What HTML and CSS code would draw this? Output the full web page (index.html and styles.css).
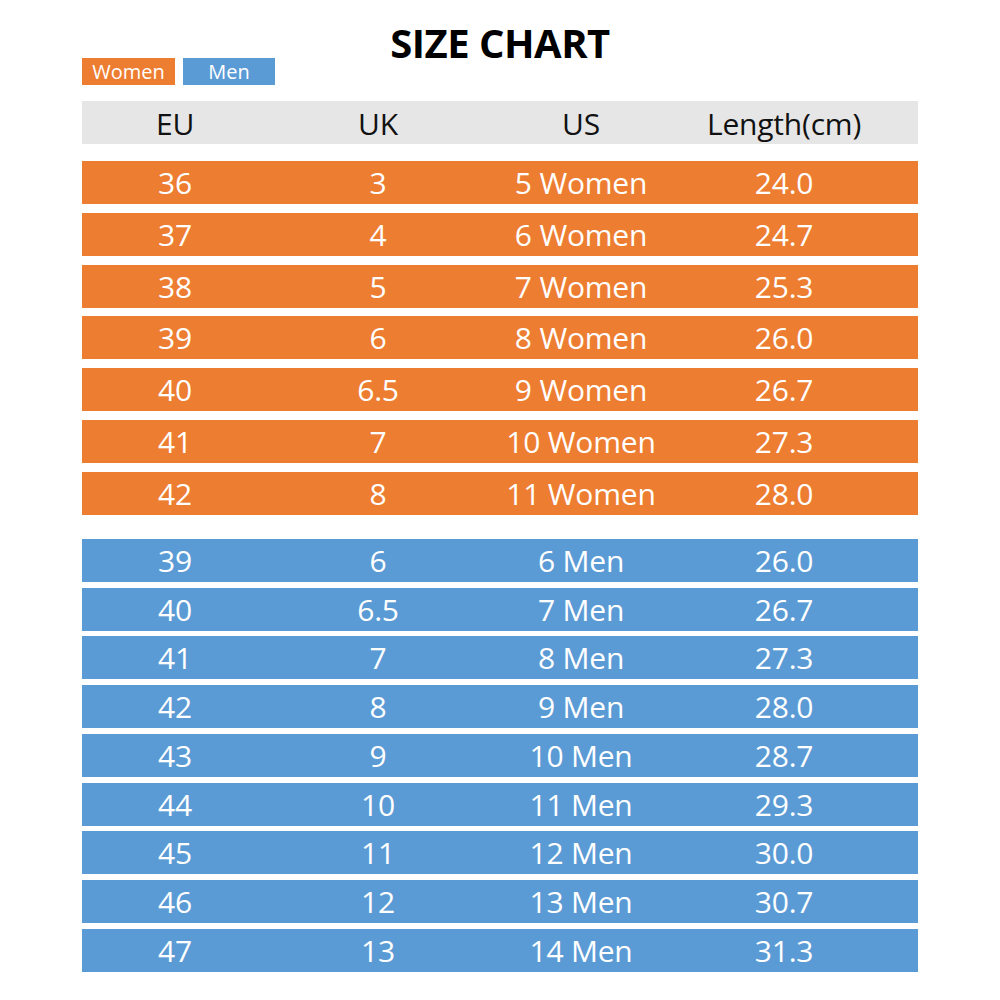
FILE: index.html
```html
<!DOCTYPE html>
<html lang="en">
<head>
<meta charset="utf-8">
<title>Size Chart</title>
<link rel="stylesheet" href="styles.css">
</head>
<body>
<main class="page">
  <h1 class="title">SIZE CHART</h1>
  <div class="legend">
    <span class="legend-item women">Women</span>
    <span class="legend-item men">Men</span>
  </div>
  <div class="row head">
    <span>EU</span><span>UK</span><span>US</span><span>Length(cm)</span>
  </div>
  <section class="group group-women">
    <div class="row women"><span>36</span><span>3</span><span>5 Women</span><span>24.0</span></div>
    <div class="row women"><span>37</span><span>4</span><span>6 Women</span><span>24.7</span></div>
    <div class="row women"><span>38</span><span>5</span><span>7 Women</span><span>25.3</span></div>
    <div class="row women"><span>39</span><span>6</span><span>8 Women</span><span>26.0</span></div>
    <div class="row women"><span>40</span><span>6.5</span><span>9 Women</span><span>26.7</span></div>
    <div class="row women"><span>41</span><span>7</span><span>10 Women</span><span>27.3</span></div>
    <div class="row women"><span>42</span><span>8</span><span>11 Women</span><span>28.0</span></div>
  </section>
  <section class="group group-men">
    <div class="row men"><span>39</span><span>6</span><span>6 Men</span><span>26.0</span></div>
    <div class="row men"><span>40</span><span>6.5</span><span>7 Men</span><span>26.7</span></div>
    <div class="row men"><span>41</span><span>7</span><span>8 Men</span><span>27.3</span></div>
    <div class="row men"><span>42</span><span>8</span><span>9 Men</span><span>28.0</span></div>
    <div class="row men"><span>43</span><span>9</span><span>10 Men</span><span>28.7</span></div>
    <div class="row men"><span>44</span><span>10</span><span>11 Men</span><span>29.3</span></div>
    <div class="row men"><span>45</span><span>11</span><span>12 Men</span><span>30.0</span></div>
    <div class="row men"><span>46</span><span>12</span><span>13 Men</span><span>30.7</span></div>
    <div class="row men"><span>47</span><span>13</span><span>14 Men</span><span>31.3</span></div>
  </section>
</main>
</body>
</html>
```

FILE: styles.css
```css
html, body {
  margin: 0;
  padding: 0;
  background: #ffffff;
}

.page {
  width: 836px;
  margin: 0 auto;
  padding-top: 29px;
  font-family: "Open Sans", "Noto Sans", sans-serif;
}

.title {
  margin: 0;
  text-align: center;
  font-size: 40px;
  line-height: 28px;
  font-weight: 700;
  color: #000;
  letter-spacing: -0.5px;
}

.legend {
  display: flex;
  gap: 8px;
  margin-top: 1px;
}

.legend-item {
  width: 93px;
  height: 27px;
  display: flex;
  align-items: center;
  justify-content: center;
  color: #fff;
  font-size: 20px;
  line-height: 27px;
}

.legend-item.women { background: #ed7d31; }
.legend-item.men { background: #5b9bd5; width: 92px; }

.row {
  display: grid;
  grid-template-columns: 186px 220px 186px 220px;
  padding-right: 24px;
  height: 43px;
  align-items: center;
  font-size: 30px;
  line-height: 43px;
  color: #fff;
  letter-spacing: -0.2px;
}

.row span {
  text-align: center;
  white-space: nowrap;
}

.row.head {
  margin-top: 16px;
  background: #e6e6e6;
  color: #111;
  padding-top: 3px;
  height: 40px;
  line-height: 40px;
}

.group {
  display: flex;
  flex-direction: column;
}

.group-women {
  margin-top: 17px;
  gap: 8.83px;
}

.group-men {
  margin-top: 24px;
  gap: 5.75px;
}

.row.women { background: #ed7d31; }
.row.men { background: #5b9bd5; }
```
